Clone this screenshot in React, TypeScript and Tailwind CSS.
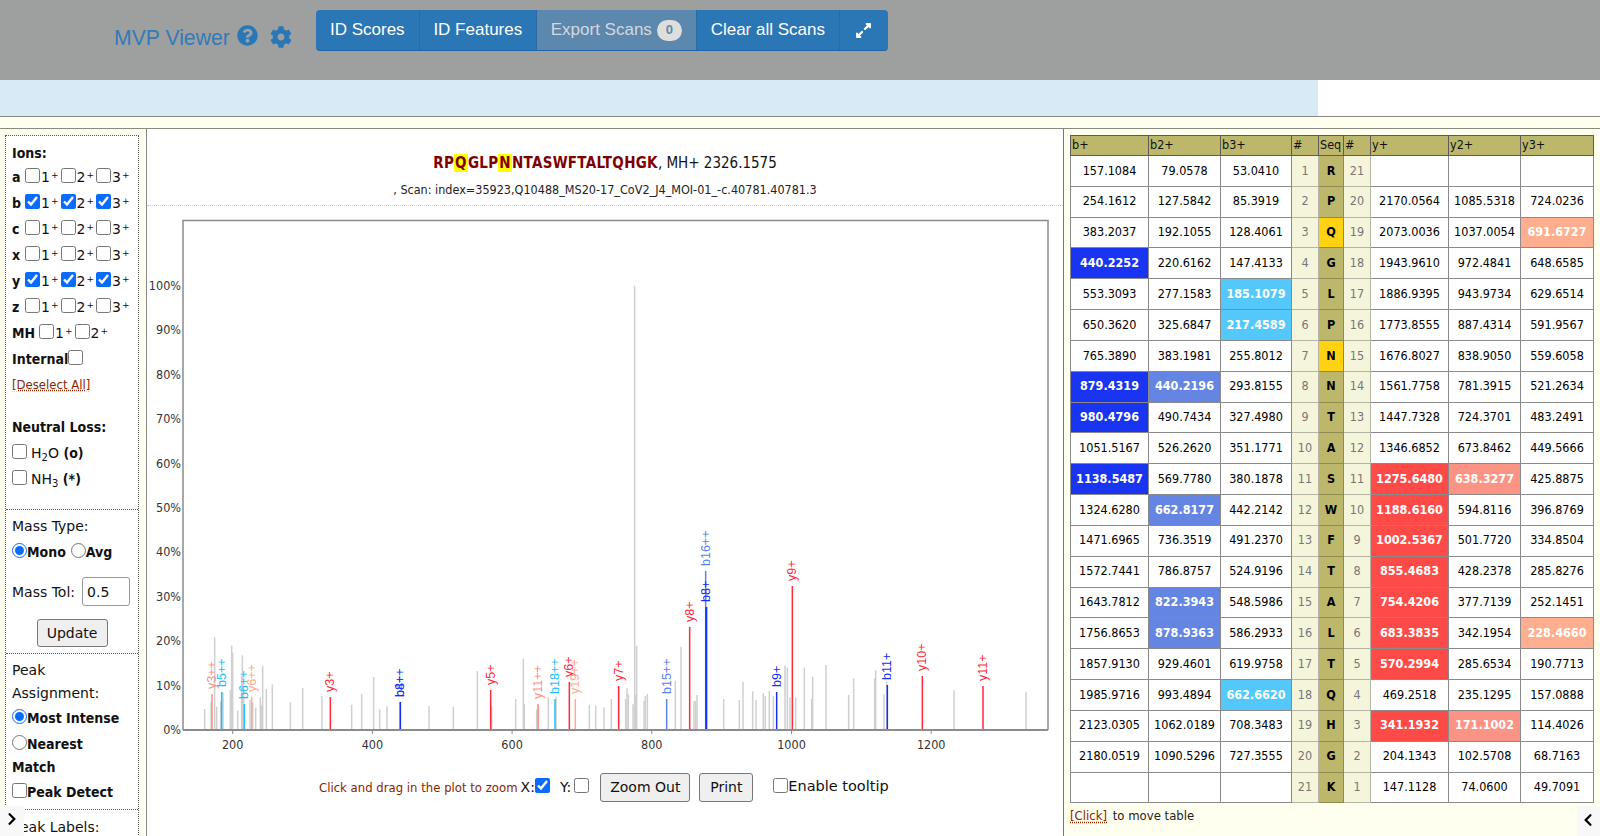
import { FaCog, FaQuestionCircle, FaExpandAlt, FaChevronLeft, FaChevronRight } from "react-icons/fa";

const uiFont = "font-['DejaVu_Sans_Condensed','Noto_Sans',sans-serif]";
const boldCondensed = "font-['DejaVu_Sans','Noto_Sans',sans-serif] [&_b]:font-['DejaVu_Sans_Condensed','Noto_Sans',sans-serif]";

// peaks as [x, top] read off the plot, converted to page px below
const leftGray = [
  [164, 627], [183, 607], [194, 412], [200, 620], [212, 605], [219, 578], [241, 570], [245, 437], [248, 458], [263, 632],
  [275, 530], [277, 466], [281, 560], [300, 600], [308, 607], [317, 623], [331, 592], [335, 615], [338, 498], [349, 567],
  [367, 553], [421, 607], [458, 564], [516, 589], [605, 614], [635, 582], [671, 531], [689, 628], [711, 619], [837, 618],
  [910, 620], [982, 513], [1025, 619], [1097, 597], [1120, 476], [1123, 612], [1160, 628], [1166, 618], [1195, 592],
  [1218, 590], [1318, 615], [1337, 616],
];
const rightGray = [
  [12, 622], [34, 597], [77, 597], [81, 565], [85, 583], [99, 613], [104, -643], [107, 585], [110, 438], [132, 603], [136, 588],
  [142, 582], [226, 542], [243, 440], [282, 603], [287, 603], [291, 585], [371, 597], [418, 600], [429, 545], [458, 574],
  [468, 600], [490, 579], [496, 588], [508, 573], [520, 588], [555, 497], [562, 503], [570, 592], [587, 592], [613, 503],
  [635, 597], [638, 530], [678, 495], [746, 585], [761, 536], [824, 535], [827, 510], [852, 583], [860, 545], [1062, 571],
  [1278, 575],
];
const grayPeaks = [
  ...leftGray.map(([x, t]) => [150 + x / 3, 500 + t / 3]),
  ...rightGray.map(([x, t]) => [600 + x / 3, 500 + t / 3]),
];

const RED = "#ff2a3a";
const BLUE = "#1530f0";
const CYAN = "#22bdfb";
const MID = "#5a82ec";
const SALMON = "#fb8f86";
const ORANGE = "#ffab8c";

const labelled: { x: number; top: number; label: string; color: string; w?: number }[] = [
  { x: 150 + 186 / 3, top: 694, label: "y3++", color: SALMON },
  { x: 150 + 215 / 3, top: 692, label: "b5++", color: CYAN },
  { x: 150 + 283 / 3, top: 704, label: "b6++", color: CYAN },
  { x: 150 + 305 / 3, top: 697, label: "y6++", color: ORANGE },
  { x: 150 + 541 / 3, top: 697, label: "y3+", color: RED },
  { x: 150 + 751 / 3, top: 702, label: "b4+", color: MID },
  { x: 150 + 751 / 3, top: 702, label: "b8++", color: BLUE },
  { x: 150 + 1022 / 3, top: 690, label: "y5+", color: RED },
  { x: 150 + 1164 / 3, top: 704, label: "y11++", color: SALMON },
  { x: 150 + 1215 / 3, top: 699, label: "b18++", color: CYAN },
  { x: 150 + 1258 / 3, top: 682, label: "y6+", color: RED },
  { x: 150 + 1276 / 3, top: 699, label: "y19++", color: ORANGE },
  { x: 600 + 56 / 3, top: 686, label: "y7+", color: RED },
  { x: 600 + 200 / 3, top: 699, label: "b15++", color: MID },
  { x: 600 + 269 / 3, top: 627, label: "y8+", color: RED },
  { x: 600 + 317 / 3, top: 571, label: "b16++", color: MID },
  { x: 600 + 319 / 3, top: 607, label: "b8+", color: BLUE, w: 2 },
  { x: 600 + 530 / 3, top: 692, label: "b9+", color: BLUE },
  { x: 600 + 577 / 3, top: 586, label: "y9+", color: RED },
  { x: 600 + 862 / 3, top: 685, label: "b11+", color: BLUE },
  { x: 600 + 967 / 3, top: 676, label: "y10+", color: RED },
  { x: 600 + 1149 / 3, top: 686, label: "y11+", color: RED },
];

const yTicks = [0, 10, 20, 30, 40, 50, 60, 70, 80, 90, 100];
const xTicks = [200, 400, 600, 800, 1000, 1200];

// B = strong blue, C = cyan, M = mid blue, R = red, S = salmon, O = orange
const rows: string[][] = [
  ["157.1084", "79.0578", "53.0410", "R", "", "", ""],
  ["254.1612", "127.5842", "85.3919", "P", "2170.0564", "1085.5318", "724.0236"],
  ["383.2037", "192.1055", "128.4061", "Q", "2073.0036", "1037.0054", "691.6727:O"],
  ["440.2252:B", "220.6162", "147.4133", "G", "1943.9610", "972.4841", "648.6585"],
  ["553.3093", "277.1583", "185.1079:C", "L", "1886.9395", "943.9734", "629.6514"],
  ["650.3620", "325.6847", "217.4589:C", "P", "1773.8555", "887.4314", "591.9567"],
  ["765.3890", "383.1981", "255.8012", "N", "1676.8027", "838.9050", "559.6058"],
  ["879.4319:B", "440.2196:M", "293.8155", "N", "1561.7758", "781.3915", "521.2634"],
  ["980.4796:B", "490.7434", "327.4980", "T", "1447.7328", "724.3701", "483.2491"],
  ["1051.5167", "526.2620", "351.1771", "A", "1346.6852", "673.8462", "449.5666"],
  ["1138.5487:B", "569.7780", "380.1878", "S", "1275.6480:R", "638.3277:S", "425.8875"],
  ["1324.6280", "662.8177:M", "442.2142", "W", "1188.6160:R", "594.8116", "396.8769"],
  ["1471.6965", "736.3519", "491.2370", "F", "1002.5367:R", "501.7720", "334.8504"],
  ["1572.7441", "786.8757", "524.9196", "T", "855.4683:R", "428.2378", "285.8276"],
  ["1643.7812", "822.3943:M", "548.5986", "A", "754.4206:R", "377.7139", "252.1451"],
  ["1756.8653", "878.9363:M", "586.2933", "L", "683.3835:R", "342.1954", "228.4660:O"],
  ["1857.9130", "929.4601", "619.9758", "T", "570.2994:R", "285.6534", "190.7713"],
  ["1985.9716", "993.4894", "662.6620:C", "Q", "469.2518", "235.1295", "157.0888"],
  ["2123.0305", "1062.0189", "708.3483", "H", "341.1932:R", "171.1002:S", "114.4026"],
  ["2180.0519", "1090.5296", "727.3555", "G", "204.1343", "102.5708", "68.7163"],
  ["", "", "", "K", "147.1128", "74.0600", "49.7091"],
];

const hitClass: Record<string, string> = {
  B: "bg-[#1a35f2] text-white font-bold",
  C: "bg-[#55c8fb] text-white font-bold",
  M: "bg-[#6485e2] text-white font-bold",
  R: "bg-[#ff4b47] text-white font-bold",
  S: "bg-[#fb9485] text-white font-bold",
  O: "bg-[#ffae90] text-white font-bold",
};

function Cell({ value }: { value: string }) {
  const [text, hit] = value.split(":");
  return (
    <td className={`border border-[#8a8a8a] text-center ${hit ? hitClass[hit] : "bg-white text-black"}`}>{text}</td>
  );
}

function Ion({ n, checked }: { n: number; checked?: boolean }) {
  return (
    <label className="w-[35.5px] shrink-0 flex items-center">
      <input type="checkbox" defaultChecked={checked} className="w-[15px] h-[15px] mb-[3px] mr-[1px] accent-[#0a6cff]" />
      <span>
        {n}
        <sup className="text-[9px] ml-[1px]">+</sup>
      </span>
    </label>
  );
}

function IonRow({ letter, checked }: { letter: string; checked?: boolean }) {
  return (
    <div className="h-[26px] flex items-center">
      <b className="w-[13px]">{letter}</b>
      <Ion n={1} checked={checked} />
      <Ion n={2} checked={checked} />
      <Ion n={3} checked={checked} />
    </div>
  );
}

function LeftPanel() {
  return (
    <aside className="w-[147px] shrink-0 bg-[#fffff0] border-r border-[#888] pl-[5px] pr-[7px] pt-[6px] overflow-hidden">
      <div className={`bg-white border border-dotted border-[#555] text-[14px] leading-[26px] text-[#111] ${boldCondensed}`}>
        <div className="pl-[6px] pt-[4px] h-[373px]">
          <b className="block h-[24px]">Ions:</b>
          <IonRow letter="a" />
          <IonRow letter="b" checked />
          <IonRow letter="c" />
          <IonRow letter="x" />
          <IonRow letter="y" checked />
          <IonRow letter="z" />
          <div className="h-[26px] flex items-center">
            <b className="mr-[4px]">MH</b>
            <Ion n={1} />
            <Ion n={2} />
          </div>
          <div className="h-[26px] flex items-center">
            <b>Internal</b>
            <input type="checkbox" className="w-[15px] h-[15px] mb-[3px]" />
          </div>
          <a className="block text-[13px] font-['DejaVu_Sans_Condensed'] text-[#8b2500] underline decoration-dotted">[Deselect All]</a>
          <b className="block mt-[16px]">Neutral Loss:</b>
          <label className="flex items-center h-[26px]">
            <input type="checkbox" className="w-[15px] h-[15px] mr-[4px] mb-[3px]" />
            <span>
              H<sub className="text-[10px]">2</sub>O <b>(o)</b>
            </span>
          </label>
          <label className="flex items-center h-[26px]">
            <input type="checkbox" className="w-[15px] h-[15px] mr-[4px] mb-[3px]" />
            <span>
              NH<sub className="text-[10px]">3</sub> <b>(*)</b>
            </span>
          </label>
        </div>
        <div className="border-t border-dotted border-[#555] pl-[6px] pt-[3px] h-[144px]">
          <div>Mass Type:</div>
          <div className="flex items-center">
            <input type="radio" name="mass" defaultChecked className="w-[15px] h-[15px] mb-[3px] accent-[#0a6cff]" />
            <b className="mr-[5px]">Mono</b>
            <input type="radio" name="mass" className="w-[15px] h-[15px] mb-[3px]" />
            <b>Avg</b>
          </div>
          <div className="flex items-center mt-[12px]">
            <span className="mr-[7px]">Mass Tol:</span>
            <input
              defaultValue="0.5"
              className="w-[48px] h-[29px] border border-[#999] rounded-[3px] pl-[4px] bg-white"
            />
          </div>
          <button className="block mx-auto mt-[13px] -translate-x-[3px] w-[71px] h-[28px] bg-[#efefef] border border-[#777] rounded-[3px] leading-none">
            Update
          </button>
        </div>
        <div className="border-t border-dotted border-[#555] pl-[6px] pt-[5px] leading-[22px] h-[156px]">
          <div>Peak</div>
          <div className="mt-[1px]">Assignment:</div>
          <label className="flex items-center mt-[1px] h-[26px]">
            <input type="radio" name="assign" defaultChecked className="w-[15px] h-[15px] mb-[3px] accent-[#0a6cff]" />
            <b>Most Intense</b>
          </label>
          <label className="flex items-center h-[26px]">
            <input type="radio" name="assign" className="w-[15px] h-[15px] mb-[3px]" />
            <b>Nearest</b>
          </label>
          <b className="block -mt-[1px]">Match</b>
          <label className="flex items-center h-[26px] mt-[1px]">
            <input type="checkbox" className="w-[15px] h-[15px] mb-[3px]" />
            <b>Peak Detect</b>
          </label>
        </div>
        <div className="border-t border-dotted border-[#555] pl-[6px] pt-[4px]">Peak Labels:</div>
      </div>
    </aside>
  );
}

function Spectrum() {
  return (
    <svg viewBox="147 206 916 556" className="block w-[916px] h-[556px]" fontFamily="'DejaVu Sans Condensed','Noto Sans',sans-serif">
      <path d="M183 730V220.5H1048V730" fill="none" stroke="#8c8c8c" strokeWidth="1.5" />
      {grayPeaks.map(([x, t], i) => (
        <line key={i} x1={x} x2={x} y1={t} y2={730} stroke="#cfcfcf" strokeWidth="1.5" />
      ))}
      {labelled.map((p) => (
        <g key={p.label + p.x} fill={p.color}>
          <line x1={p.x} x2={p.x} y1={p.top} y2={730} stroke={p.color} strokeWidth={p.w ?? 1.5} />
          <text
            transform={`translate(${p.x + 4} ${p.top - 5}) rotate(-90)`}
            fontSize="12.5"
            fontFamily="'Liberation Sans',sans-serif"
          >
            {p.label}
          </text>
        </g>
      ))}
      <line x1="183" x2="1048" y1="730" y2="730" stroke="#8c8c8c" strokeWidth="2" />
      {yTicks.map((t) => (
        <text key={t} x="181" y={734 - t * 4.44} fontSize="12.5" textAnchor="end" fill="#333">
          {t}%
        </text>
      ))}
      {xTicks.map((t) => {
        const x = 232.7 + (t - 200) * 0.6985;
        return (
          <g key={t}>
            <line x1={x} x2={x} y1="730" y2="734" stroke="#8c8c8c" />
            <text x={x} y="749" fontSize="12.5" textAnchor="middle" fill="#333">
              {t}
            </text>
          </g>
        );
      })}
    </svg>
  );
}

function CenterPanel() {
  return (
    <main className="flex-1 min-w-0 bg-white">
      <div className="h-[77px] border-b border-dotted border-[#ccc] flex flex-col items-center">
        <div className="mt-[24px] text-[15px] leading-[20px] text-[#111]">
          <b className="text-[#800000] tracking-[0.3px]">
            RP<span className="bg-[#ffff00] px-[1px]">Q</span>GLP<span className="bg-[#ffff00] px-[1px]">N</span>
            NTASWFTALTQHGK
          </b>
          , MH+ 2326.1575
        </div>
        <div className="mt-[9px] text-[12.5px] leading-[16px] text-[#222]">
          , Scan: index=35923,Q10488_MS20-17_CoV2_J4_MOI-01_-c.40781.40781.3
        </div>
      </div>
      <Spectrum />
      <div className="flex items-center h-[30px] mt-[10px] pl-[172px] text-[14px] text-[#111] font-['DejaVu_Sans',sans-serif]">
        <span className="text-[13px] font-['DejaVu_Sans_Condensed'] text-[#8b2500] mr-[3px] mt-[2px]">Click and drag in the plot to zoom</span>
        <span>X:</span>
        <input type="checkbox" defaultChecked className="w-[15px] h-[15px] mr-[10px] accent-[#0a6cff] mb-[3px]" />
        <span>Y:</span>
        <input type="checkbox" className="w-[15px] h-[15px] ml-[3px] mb-[3px]" />
        <button className="ml-[11px] w-[90px] h-[29px] bg-[#efefef] border border-[#777] rounded-[3px]">Zoom Out</button>
        <button className="ml-[9px] w-[54px] h-[29px] bg-[#efefef] border border-[#777] rounded-[3px]">Print</button>
        <label className="flex items-center ml-[20px] text-[14.5px]">
          <input type="checkbox" className="w-[15px] h-[15px] mb-[3px]" />
          Enable tooltip
        </label>
      </div>
    </main>
  );
}

function IonTable() {
  const headCls = "border border-[#5c5c5c] bg-[#bdb76b] text-left font-normal text-[#111] p-0 pl-[1px]";
  return (
    <table className="w-[523px] table-fixed border-collapse text-[12.5px] text-black">
      <colgroup>
        <col className="w-[78px]" />
        <col className="w-[72px]" />
        <col className="w-[71px]" />
        <col className="w-[27px]" />
        <col className="w-[25px]" />
        <col className="w-[27px]" />
        <col className="w-[78px]" />
        <col className="w-[72px]" />
        <col className="w-[73px]" />
      </colgroup>
      <thead>
        <tr className="h-[20px]">
          {["b+", "b2+", "b3+", "#", "Seq", "#", "y+", "y2+", "y3+"].map((h, i) => (
            <th key={i} className={headCls}>
              {h}
            </th>
          ))}
        </tr>
      </thead>
      <tbody>
        {rows.map((r, i) => {
          const gold = (i === 2 || i === 6) && "bg-[#ffd314]";
          return (
            <tr key={i} className="h-[30.84px]">
              <Cell value={r[0]} />
              <Cell value={r[1]} />
              <Cell value={r[2]} />
              <td className="border border-[#b5b5a5] bg-[#f5f5dc] text-center text-[#777]">{i + 1}</td>
              <td className={`border border-[#8f8b50] text-center font-bold ${gold || "bg-[#bdb76b]"}`}>{r[3]}</td>
              <td className="border border-[#b5b5a5] bg-[#f5f5dc] text-center text-[#777]">{21 - i}</td>
              <Cell value={r[4]} />
              <Cell value={r[5]} />
              <Cell value={r[6]} />
            </tr>
          );
        })}
      </tbody>
    </table>
  );
}

function RightPanel() {
  return (
    <aside className="w-[537px] shrink-0 bg-[#fffff0] border-l border-[#777] pl-[6px] pt-[6px] text-[13px] relative">
      <IonTable />
      <div className="mt-[3px] text-[#222]">
        <a className="text-[#8b2500] underline decoration-dotted">[Click]</a> <span className="ml-[2px]">to move table</span>
      </div>
    </aside>
  );
}

function TopBar() {
  const btn = "h-full flex items-center justify-center border-r border-[#2a6ba3]";
  return (
    <header className="h-[80px] bg-[#9ea09f] flex font-['Liberation_Sans',sans-serif]">
      <div className="ml-[114px] mt-[24px] h-[28px] flex items-center text-[21.2px] text-[#337ab7]">
        MVP Viewer
        <FaQuestionCircle className="ml-[7px] -mt-[5px] text-[21px] text-[#2a77b8]" />
        <FaCog className="ml-[12px] -mt-[2px] text-[22px] text-[#2a77b8]" />
      </div>
      <nav className="ml-[24px] mt-[10px] h-[41px] flex rounded-[4px] overflow-hidden border-b border-[#1f66a8] bg-[#2b76b4] text-[17px] text-white">
        <div className={`${btn} w-[104px]`}>ID Scores</div>
        <div className={`${btn} w-[117px]`}>ID Features</div>
        <div className={`${btn} w-[160px] bg-[#5c88ae] text-[#d4d8dc]`}>
          Export Scans
          <span className="ml-[5px] w-[25px] h-[21px] rounded-full bg-[#dedede] text-[#5c88ae] text-[13px] font-bold flex items-center justify-center">
            0
          </span>
        </div>
        <div className={`${btn} w-[143px]`}>Clear all Scans</div>
        <div className="w-[48px] h-full flex items-center justify-center">
          <FaExpandAlt className="text-[17px]" />
        </div>
      </nav>
    </header>
  );
}

export default function App() {
  return (
    <div className={`h-[836px] overflow-hidden flex flex-col bg-white relative ${uiFont}`}>
      <TopBar />
      <div className="h-[36px] shrink-0 flex">
        <div className="w-[1318px] bg-[#d9eaf7]" />
      </div>
      <div className="h-[13px] shrink-0 bg-[#fffff0] border-y border-[#8a8a80]" />
      <div className="flex-1 min-h-0 flex">
        <LeftPanel />
        <CenterPanel />
        <RightPanel />
      </div>
      <button className="absolute left-0 bottom-0 w-[24px] h-[30px] bg-[#f8f8f8] flex items-start pt-[6px] pl-[5px] text-[14px] text-black">
        <FaChevronRight />
      </button>
      <button className="absolute right-0 bottom-0 w-[23px] h-[30px] bg-[#f8f8f8] flex items-start pt-[7px] pl-[4px] text-[14px] text-black">
        <FaChevronLeft />
      </button>
    </div>
  );
}
